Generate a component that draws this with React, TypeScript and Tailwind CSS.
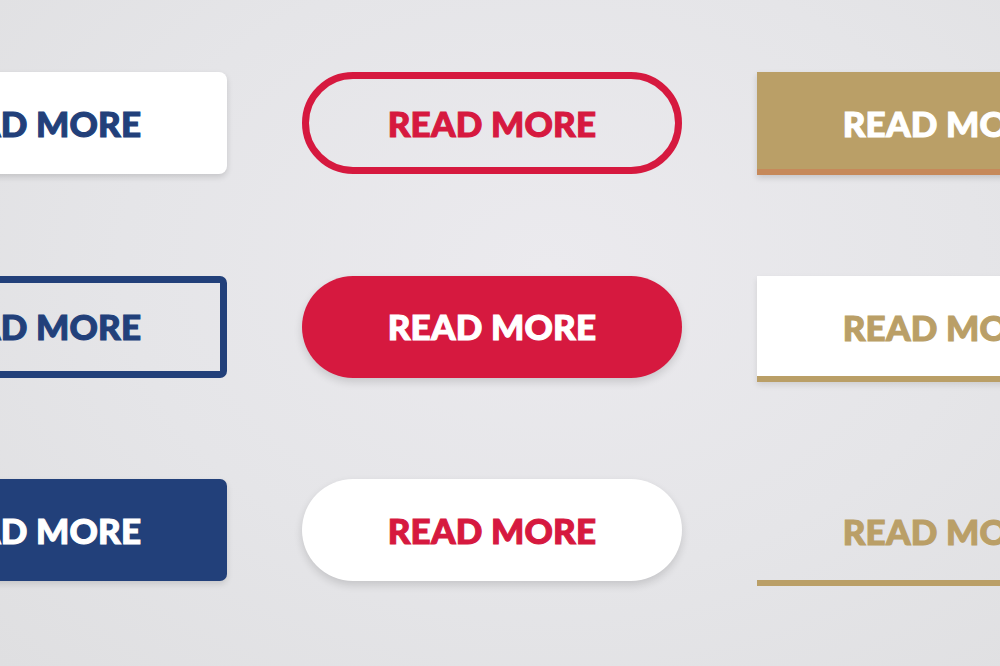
import React from "react";

type Variant = {
  key: string;
  className: string;
};

// laid out row by row: navy / red / gold in each row
const rows: Variant[][] = [
  [
    { key: "navy-white", className: "h-[102px] rounded-[8px] bg-white text-[#22407a] shadow-[0_3px_6px_rgba(0,0,0,0.14)]" },
    { key: "red-outline", className: "h-[102px] rounded-full border-[7px] border-[#d6193f] text-[#d6193f]" },
    { key: "gold-fill", className: "h-[103px] pt-[6px] bg-[#ba9f67] border-b-[6px] border-[#c6895a] text-white shadow-[0_3px_6px_rgba(0,0,0,0.14)]" },
  ],
  [
    { key: "navy-outline", className: "h-[102px] rounded-[7px] border-[7px] border-[#22407a] text-[#22407a]" },
    { key: "red-fill", className: "h-[102px] rounded-full bg-[#d6193f] text-white shadow-[0_4px_8px_rgba(0,0,0,0.14)]" },
    { key: "gold-white", className: "h-[106px] pt-[3px] bg-white border-b-[6px] border-[#ba9f67] text-[#ba9f67] shadow-[0_3px_6px_rgba(0,0,0,0.1)]" },
  ],
  [
    { key: "navy-fill", className: "h-[102px] rounded-[7px] bg-[#22407a] text-white shadow-[0_3px_6px_rgba(0,0,0,0.12)]" },
    { key: "red-white", className: "h-[102px] rounded-full bg-white text-[#d6193f] shadow-[0_4px_8px_rgba(0,0,0,0.14)]" },
    { key: "gold-line", className: "h-[107px] pt-[4px] border-b-[6px] border-[#ba9f67] text-[#ba9f67]" },
  ],
];

const ReadMore: React.FC<{ className: string }> = ({ className }) => (
  <button
    className={`flex w-[380px] items-center justify-center text-[35px] font-black tracking-[0.2px] leading-none [-webkit-text-stroke:1.1px_currentColor] ${className}`}
    style={{ fontFamily: "Lato, 'Open Sans', sans-serif" }}
  >
    READ MORE
  </button>
);

const App: React.FC = () => {
  return (
    <div className="h-[666px] w-[1000px] overflow-hidden bg-[radial-gradient(ellipse_at_55%_40%,#ebeaee_0%,#e5e5e8_55%,#dfdfe1_100%)]">
      <div className="ml-[-153px] grid grid-cols-[380px_380px_380px] grid-rows-[102px_102px_102px] items-start gap-x-[75px] gap-y-[101.5px] pt-[72px]">
        {rows.flat().map((v) => (
          <ReadMore key={v.key} className={v.className} />
        ))}
      </div>
    </div>
  );
};

export default App;
